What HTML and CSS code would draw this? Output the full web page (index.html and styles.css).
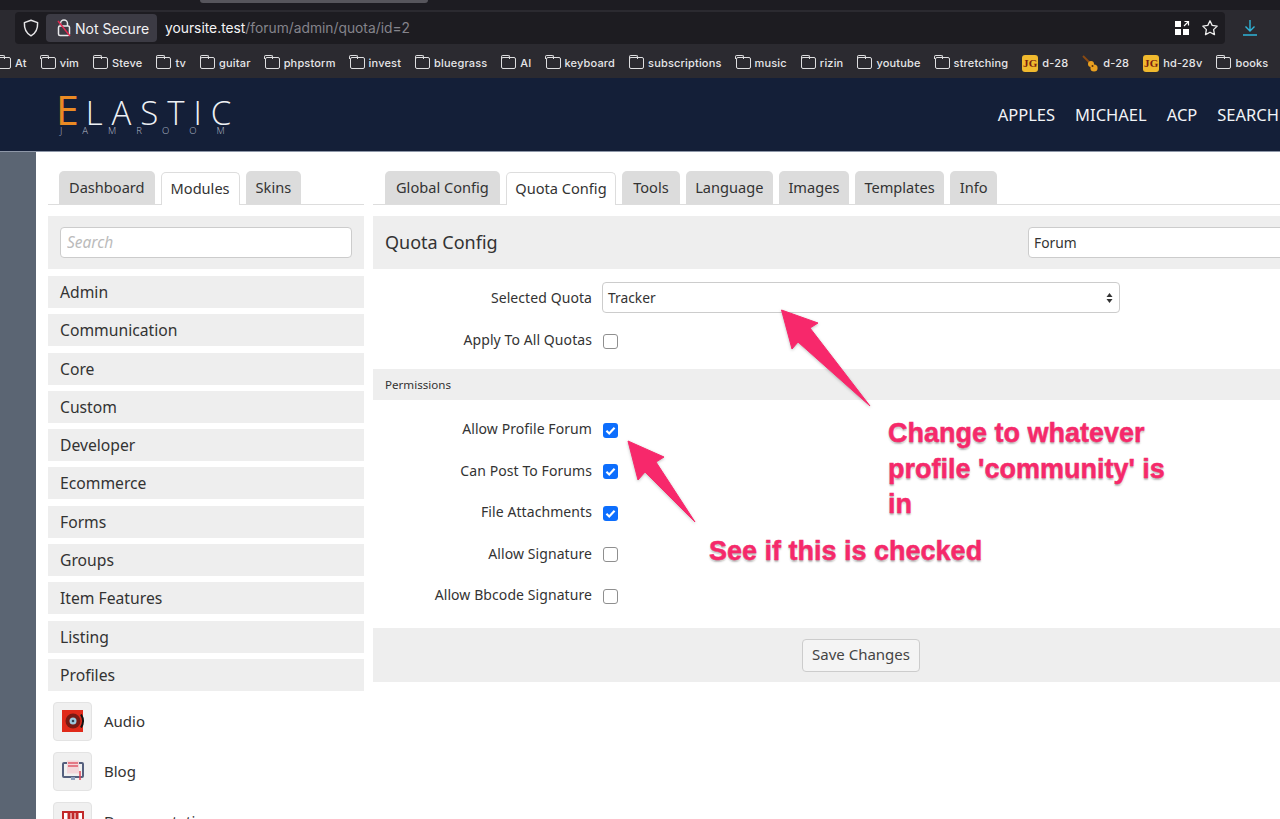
FILE: index.html
```html
<!DOCTYPE html>
<html lang="en">
<head>
<meta charset="utf-8">
<title>Quota Config</title>
<link rel="stylesheet" href="styles.css">
</head>
<body>
<div class="chrome">
  <div class="tabstrip"><div class="tabpill"></div></div>
  <div class="addr-row">
    <div class="urlbar">
      <svg class="shield" width="18" height="20" viewBox="0 0 18 20"><path d="M9 2.2 15.6 4.6c.3 6-1.6 10.6-6.6 13.2C4 15.2 2.100 10.600 2.400 4.600Z" fill="none" stroke="#e6e6e8" stroke-width="1.500" stroke-linejoin="round"/></svg>
      <div class="secure">
        <svg width="16" height="20" viewBox="0 0 16 20"><path d="M4.500 8V5.500a3.500 3.500 0 0 1 7 0V8" fill="none" stroke="#e8e8ea" stroke-width="1.500"/><rect x="2.500" y="8" width="11" height="9.500" rx="1.500" fill="none" stroke="#e8e8ea" stroke-width="1.500"/><path d="M2 3 14 18" stroke="#e22850" stroke-width="1.500"/></svg>
        <span>Not Secure</span>
      </div>
      <div class="url"><b>yoursite.test</b>/forum/admin/quota/id=2</div>
      <div class="url-actions">
        <svg width="16" height="16" viewBox="0 0 16 16"><path fill="#fff" d="M1 1h6v6H1zM1 9h6v6H1zM9 9h6v6H9z"/><path d="M10 6l4.500-4.500M10.500 1.500h4v4" fill="none" stroke="#fff" stroke-width="1.200"/></svg>
        <svg width="18" height="18" viewBox="0 0 18 18"><path d="M9 1.800l2.200 4.600 5 .7-3.600 3.500.9 5L9 13.200l-4.500 2.400.9-5L1.800 7.100l5-.7Z" fill="none" stroke="#eee" stroke-width="1.300" stroke-linejoin="round"/></svg>
      </div>
    </div>
    <svg class="download" width="18" height="18" viewBox="0 0 18 18"><path d="M9 1v11M4.500 7.500 9 12l4.500-4.500M2 16h14" fill="none" stroke="#2fb4d8" stroke-width="1.400"/></svg>
  </div>
  <div class="bookmarks">
    <span class="bm bm-first"><i class="folder"></i>At</span>
    <span class="bm"><i class="folder"></i>vim</span>
    <span class="bm"><i class="folder"></i>Steve</span>
    <span class="bm"><i class="folder"></i>tv</span>
    <span class="bm"><i class="folder"></i>guitar</span>
    <span class="bm"><i class="folder"></i>phpstorm</span>
    <span class="bm"><i class="folder"></i>invest</span>
    <span class="bm"><i class="folder"></i>bluegrass</span>
    <span class="bm"><i class="folder"></i>AI</span>
    <span class="bm"><i class="folder"></i>keyboard</span>
    <span class="bm"><i class="folder"></i>subscriptions</span>
    <span class="bm"><i class="folder"></i>music</span>
    <span class="bm"><i class="folder"></i>rizin</span>
    <span class="bm"><i class="folder"></i>youtube</span>
    <span class="bm"><i class="folder"></i>stretching</span>
    <span class="bm"><i class="jg">JG</i>d-28</span>
    <span class="bm"><svg class="uke" width="17" height="17" viewBox="0 0 17 17"><path d="M1 1l6 6" stroke="#8a4a12" stroke-width="2"/><circle cx="9" cy="9" r="3" fill="#e9a020"/><circle cx="12" cy="13" r="3.600" fill="#e9a020"/><circle cx="10.500" cy="11" r="1" fill="#5a300c"/></svg>d-28</span>
    <span class="bm"><i class="jg">JG</i>hd-28v</span>
    <span class="bm"><i class="folder"></i>books</span>
  </div>
</div>

<header class="site-head">
  <div class="logo">
    <div class="logo-main"><span class="logo-e">E</span>LASTIC</div>
    <div class="logo-sub">JAMROOM</div>
  </div>
  <nav class="site-nav">
    <a>APPLES</a><a>MICHAEL</a><a>ACP</a><a>SEARCH</a>
  </nav>
</header>

<div class="page">
  <div class="gutter"></div>
  <main class="content">
    <aside class="left">
      <div class="tabs tabs-left">
        <span class="tab">Dashboard</span>
        <span class="tab active">Modules</span>
        <span class="tab">Skins</span>
      </div>
      <div class="search-block"><input class="search" placeholder="Search"></div>
      <div class="cat">Admin</div>
      <div class="cat">Communication</div>
      <div class="cat">Core</div>
      <div class="cat">Custom</div>
      <div class="cat">Developer</div>
      <div class="cat">Ecommerce</div>
      <div class="cat">Forms</div>
      <div class="cat">Groups</div>
      <div class="cat">Item Features</div>
      <div class="cat">Listing</div>
      <div class="cat">Profiles</div>
      <div class="mod">
        <div class="mod-icon"><svg width="24" height="24" viewBox="0 0 24 24"><rect x="1" y="1" width="21" height="22" fill="#e02a1a"/><circle cx="12" cy="12" r="7.500" fill="#7a1a14"/><circle cx="12" cy="12" r="3.500" fill="#9ccbe0"/><circle cx="12" cy="12" r="1.300" fill="#345"/><path d="M20 5.500c2.500 4 2.500 9 0 13" fill="none" stroke="#111" stroke-width="2"/></svg></div>
        <span>Audio</span>
      </div>
      <div class="mod">
        <div class="mod-icon"><svg width="24" height="24" viewBox="0 0 24 24"><rect x="2" y="4" width="20" height="14" rx="1" fill="none" stroke="#55607e" stroke-width="2"/><rect x="6" y="1.500" width="12" height="13" fill="#f3d6da"/><path d="M7 4h10M7 7h10" stroke="#e0596a" stroke-width="1.300"/><path d="M10 18h4v3h-4z" fill="#8fa0bd"/><path d="M19 12v9" stroke="#e0475a" stroke-width="1.500"/></svg></div>
        <span>Blog</span>
      </div>
      <div class="mod">
        <div class="mod-icon"><svg width="24" height="24" viewBox="0 0 24 24"><rect x="2" y="3" width="20" height="18" fill="#fff" stroke="#c22a2a" stroke-width="2"/><path d="M8 3v11M12 3v11M16 3v11" stroke="#c22a2a" stroke-width="3"/></svg></div>
        <span>Documentation</span>
      </div>
    </aside>

    <section class="right">
      <div class="tabs tabs-right">
        <span class="tab tab-wide">Global Config</span>
        <span class="tab active">Quota Config</span>
        <span class="tab tab-wide">Tools</span>
        <span class="tab">Language</span>
        <span class="tab">Images</span>
        <span class="tab">Templates</span>
        <span class="tab">Info</span>
      </div>
      <div class="title-bar">
        <h1>Quota Config</h1>
        <div class="select select-module">Forum</div>
      </div>
      <div class="row row-select">
        <label>Selected Quota</label>
        <div class="select select-quota">Tracker
          <svg class="updown" width="7" height="10" viewBox="0 0 7 10"><path d="M3.500 0 6.500 4H.5ZM3.500 10 .5 6h6Z" fill="#333"/></svg>
        </div>
      </div>
      <div class="row row-apply"><label>Apply To All Quotas</label><i class="cb"></i></div>
      <div class="band">Permissions</div>
      <div class="row row-first"><label>Allow Profile Forum</label><i class="cb on"><svg width="15" height="15" viewBox="0 0 14 14"><path d="M3.200 7.300 5.800 9.800 10.800 4.400" fill="none" stroke="#fff" stroke-width="2"/></svg></i></div>
      <div class="row"><label>Can Post To Forums</label><i class="cb on"><svg width="15" height="15" viewBox="0 0 14 14"><path d="M3.200 7.300 5.800 9.800 10.800 4.400" fill="none" stroke="#fff" stroke-width="2"/></svg></i></div>
      <div class="row"><label>File Attachments</label><i class="cb on"><svg width="15" height="15" viewBox="0 0 14 14"><path d="M3.200 7.300 5.800 9.800 10.800 4.400" fill="none" stroke="#fff" stroke-width="2"/></svg></i></div>
      <div class="row"><label>Allow Signature</label><i class="cb"></i></div>
      <div class="row"><label>Allow Bbcode Signature</label><i class="cb"></i></div>
      <div class="save-band"><button class="save">Save Changes</button></div>
    </section>
  </main>
</div>

<svg class="arrows" width="1280" height="819" viewBox="0 0 1280 819">
  <path class="arrow" d="M781.500 310 818 323 810 328 870 406 798 342 792 349Z"/>
  <path class="arrow" d="M628 441 664 457 656 462 695 522 645 472 638 480Z"/>
</svg>
<div class="note note-a">Change to whatever<br>profile 'community' is<br>in</div>
<div class="note note-b">See if this is checked</div>
</body>
</html>
```
FILE: styles.css
```css
* { box-sizing: border-box; }
html, body { margin: 0; padding: 0; width: 1280px; height: 819px; overflow: hidden; background: #fff; }
body { position: relative; font-family: "Noto Sans", "Open Sans", sans-serif; color: #333; }

.chrome { height: 78px; background: #2b2a30; display: flex; flex-direction: column; font-family: Inter, "Liberation Sans", sans-serif; }
.tabstrip { height: 10px; background: #1d1c22; padding-left: 200px; }
.tabpill { width: 228px; height: 3px; background: #56555c; border-radius: 0 0 4px 4px; }
.addr-row { height: 36px; display: flex; align-items: center; padding: 0 0 0 15px; }
.urlbar { width: 1210px; height: 32px; background: #1d1c21; border-radius: 4px; display: flex; align-items: center; padding-left: 7px; }
.shield { flex: none; }
.secure { display: flex; align-items: center; gap: 3px; height: 28px; margin-left: 6px; padding: 0 8px 0 10px; background: #3c3b44; border-radius: 4px; color: #f2f2f4; font-size: 14px; width: 111px; }
.secure svg { flex: none; }
.secure span { white-space: nowrap; }
.url { margin-left: 8px; color: #85848c; font-size: 13.800px; white-space: nowrap; }
.url b { color: #f4f4f6; font-weight: 400; }
.url-actions { margin-left: auto; display: flex; align-items: center; gap: 11px; padding-right: 6px; }
.download { margin-left: 16px; flex: none; }

.bookmarks { height: 32px; padding-top: 2px; display: flex; align-items: center; gap: 14px; margin-left: -4px; font-size: 11px; font-weight: 500; color: #e6e6e8; white-space: nowrap; letter-spacing: .17px; }
.bm { display: flex; align-items: center; gap: 4px; }
.folder { flex: none; display: block; width: 15px; height: 12px; border: 1.300px solid #dedee0; border-radius: 2px; position: relative; }
.folder::before { content: ""; position: absolute; left: -1.300px; top: -3px; width: 7px; height: 3px; border: 1.300px solid #dedee0; border-bottom: 0; border-radius: 2px 2px 0 0; }
.jg { flex: none; width: 16px; height: 17px; background: #f0b92e; color: #7a1c10; border-radius: 3px; font: 700 11px/17px "Liberation Serif", serif; text-align: center; }
.uke { flex: none; }

.site-head { height: 74px; background: #141f38; display: flex; align-items: center; justify-content: space-between; padding-left: 56px; border-bottom: 1px solid #8e97a8; overflow: hidden; }
.logo { color: #eef1f5; font-family: "Open Sans", sans-serif; font-weight: 300; margin-top: -2px; }
.logo-main { font-size: 33px; line-height: 34px; letter-spacing: 8.900px; height: 34px; }
.logo-e { color: #ea8a24; font-size: 41px; line-height: 34px; letter-spacing: 7px; font-weight: 400; }
.logo-sub { font-size: 9.500px; line-height: 10px; letter-spacing: 20px; color: #b6bcc8; padding-left: 4px; }
.site-nav { display: flex; gap: 20px; color: #f1f3f6; font-size: 16.500px; margin-right: 1px; white-space: nowrap; flex: none; }

.page { display: flex; height: 667px; width: 1400px; }
.gutter { width: 36px; flex: none; background: #5b6573; }
.content { flex: none; width: 1340px; padding: 19px 0 0 12px; display: flex; gap: 9px; background: #fff; }
.left { width: 316px; flex: none; }
.right { width: 974px; flex: none; }

.tabs { height: 34px; display: flex; gap: 6px; align-items: flex-end; border-bottom: 1px solid #ddd; }
.tabs-left { padding-left: 11px; }
.tabs-right { padding-left: 12px; width: 907px; }
.tab { height: 33px; line-height: 32px; padding: 0 9.500px; font-size: 14.600px; background: #dcdcdc; border-radius: 5px 5px 0 0; color: #333; white-space: nowrap; }
.tab-wide { padding: 0 11px; }
.tabs-left .tab { padding: 0 10px; }
.tab.active { background: #fff; border: 1px solid #ddd; border-bottom: 0; padding: 0 8.500px; position: relative; top: 1px; line-height: 31px; }
.tabs-left .tab.active { padding: 0 9px; }

.search-block { margin-top: 11px; height: 53px; background: #eee; padding: 11px 12px; }
.search { display: block; width: 292px; height: 31px; border: 1px solid #ccc; border-radius: 4px; padding: 0 6px 2px; font: italic 15.500px "Noto Sans", sans-serif; background: #fff; }
.search::placeholder { color: #bbb; }
.cat { height: 32px; margin-top: 6.300px; background: #eee; padding-left: 12px; line-height: 33px; font-size: 15.700px; }
.search-block + .cat { margin-top: 7px; }
.mod { display: flex; align-items: center; gap: 12px; height: 39px; margin: 11px 0 0 5px; font-size: 15px; }
.mod-icon { width: 39px; height: 39px; flex: none; background: #f0f0f0; border: 1px solid #e3e3e3; border-radius: 4px; display: flex; align-items: center; justify-content: center; }

.title-bar { margin-top: 11px; height: 53px; background: #eee; display: flex; align-items: center; justify-content: space-between; padding: 0 0 0 12px; }
.title-bar h1 { margin: 0 0 2px; font-size: 18px; font-weight: 400; color: #333; }
.select { background: #fff; border: 1px solid #ccc; border-radius: 4px; height: 31px; line-height: 29px; padding-left: 5px; font-size: 13.800px; position: relative; }
.select-module { width: 319px; }
.select-quota { width: 518px; margin-left: 10px; }
.updown { position: absolute; right: 6px; top: 10px; }

.row { display: flex; align-items: center; height: 30px; margin-top: 11.500px; font-size: 14px; }
.row label { width: 219px; text-align: right; white-space: nowrap; padding-bottom: 1px; letter-spacing: .08px; }
.row .cb { margin-left: 11px; margin-top: 2px; }
.row-select { height: 31px; margin-top: 13px; }
.row-select label { padding-bottom: 0; }
.row-apply { height: 30px; margin-top: 12px; }
.row-first { margin-top: 14px; }
.cb { display: block; flex: none; width: 15px; height: 15px; border: 1px solid #8f8f8f; border-radius: 3px; background: #fff; }
.cb.on { background: #0d6efd; border: 0; }
.cb svg { display: block; }
.band { margin-top: 14px; height: 31px; line-height: 31px; background: #eee; padding-left: 12px; font-size: 11.600px; }
.save-band { margin-top: 18px; height: 54px; background: #eee; display: flex; align-items: center; justify-content: center; }
.save { width: 118px; height: 33px; margin-left: 2px; background: #f4f4f4; border: 1px solid #ccc; border-radius: 4px; font: 15px "Noto Sans", sans-serif; color: #444; padding: 0 0 2px; }

.arrows { position: absolute; left: 0; top: 0; pointer-events: none; }
.arrow { fill: #f7286b; stroke: #f7286b; stroke-width: 1; stroke-linejoin: round; filter: drop-shadow(0 1px 1.500px rgba(0,0,0,.25)); }
.note { position: absolute; font: 700 27px/35.500px "Liberation Sans", Arial, sans-serif; color: #f5296a; -webkit-text-stroke: .5px #f5296a; white-space: nowrap; text-shadow: 0 0 1px #fff, 0 1px 1px rgba(0,0,0,.35), 1px 1px 0 #fff, -1px 1px 0 #fff, 0 2px 2px rgba(0,0,0,.25); }
.note-a { left: 888px; top: 416px; }
.note-b { left: 709px; top: 534px; }
```
